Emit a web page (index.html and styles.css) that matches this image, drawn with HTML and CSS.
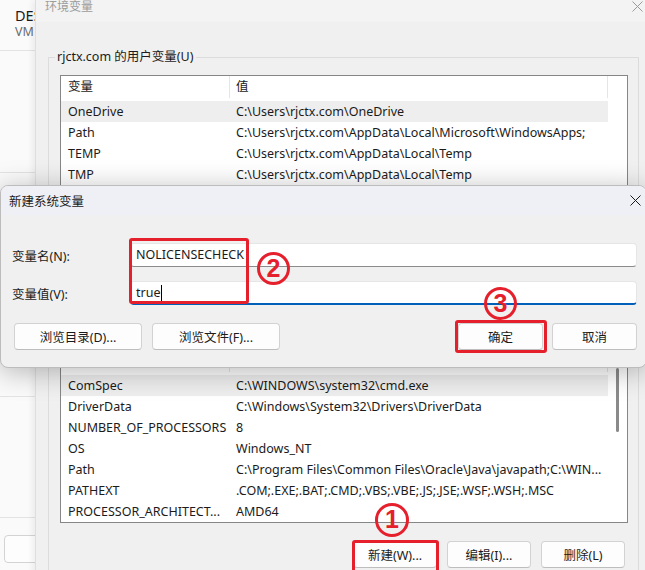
FILE: index.html
```html
<!DOCTYPE html>
<html lang="zh-CN">
<head>
    <meta charset="UTF-8">
    <title>新建系统变量</title>
    <link rel="stylesheet" href="styles.css">
</head>
<body>

<div class="backwin">
    <div class="bw-head">
        <div class="bw-name">DES</div>
        <div class="bw-sub">VM</div>
    </div>
    <div class="bw-cell c1"></div>
    <div class="bw-cell c2"></div>
    <div class="bw-cell c3"></div>
    <div class="bw-btn"></div>
</div>

<div class="envwin">
    <div class="titlebar">
        <span class="title">环境变量</span>
        <svg class="close grey" width="11" height="11" viewBox="0 0 11 11"><path d="M0.5 0.5L10.5 10.5M10.5 0.5L0.5 10.5" /></svg>
    </div>
    <div class="envbody">
        <fieldset class="group">
            <legend>rjctx.com 的用户变量(U)</legend>
            <div class="group-in">
                <div class="list user-list">
                    <div class="list-main">
                        <div class="list-head"><span>变量</span><span>值</span></div>
                        <div class="list-rows">
                            <div class="row sel"><span>OneDrive</span><span>C:\Users\rjctx.com\OneDrive</span></div>
                            <div class="row"><span>Path</span><span>C:\Users\rjctx.com\AppData\Local\Microsoft\WindowsApps;</span></div>
                            <div class="row"><span>TEMP</span><span>C:\Users\rjctx.com\AppData\Local\Temp</span></div>
                            <div class="row"><span>TMP</span><span>C:\Users\rjctx.com\AppData\Local\Temp</span></div>
                        </div>
                    </div>
                    <div class="vscroll"></div>
                </div>
                <div class="btn-row">
                    <button class="btn">新建(N)...</button>
                    <button class="btn">编辑(E)...</button>
                    <button class="btn">删除(D)</button>
                </div>
            </div>
        </fieldset>

        <fieldset class="group sys">
            <legend>系统变量(S)</legend>
            <div class="group-in">
                <div class="list">
                    <div class="list-main">
                        <div class="list-head"><span>变量</span><span>值</span></div>
                        <div class="list-rows">
                            <div class="row sel"><span>ComSpec</span><span>C:\WINDOWS\system32\cmd.exe</span></div>
                            <div class="row"><span>DriverData</span><span>C:\Windows\System32\Drivers\DriverData</span></div>
                            <div class="row"><span>NUMBER_OF_PROCESSORS</span><span>8</span></div>
                            <div class="row"><span>OS</span><span>Windows_NT</span></div>
                            <div class="row"><span>Path</span><span>C:\Program Files\Common Files\Oracle\Java\javapath;C:\WIN...</span></div>
                            <div class="row"><span>PATHEXT</span><span>.COM;.EXE;.BAT;.CMD;.VBS;.VBE;.JS;.JSE;.WSF;.WSH;.MSC</span></div>
                            <div class="row"><span>PROCESSOR_ARCHITECT...</span><span>AMD64</span></div>
                        </div>
                    </div>
                    <div class="vscroll"><div class="thumb"></div></div>
                </div>
                <div class="btn-row">
                    <button class="btn">新建(W)...</button>
                    <button class="btn">编辑(I)...</button>
                    <button class="btn">删除(L)</button>
                </div>
            </div>
        </fieldset>
    </div>
</div>

<div class="dialog">
    <div class="dlg-title">
        <span>新建系统变量</span>
        <svg class="close" width="11" height="11" viewBox="0 0 11 11"><path d="M0.5 0.5L10.5 10.5M10.5 0.5L0.5 10.5" /></svg>
    </div>
    <div class="dlg-body">
        <div class="field">
            <label>变量名(N):</label>
            <div class="input">NOLICENSECHECK</div>
        </div>
        <div class="field">
            <label>变量值(V):</label>
            <div class="input focus">true<span class="caret"></span></div>
        </div>
        <div class="dlg-btns">
            <button class="btn wide">浏览目录(D)...</button>
            <button class="btn wide">浏览文件(F)...</button>
            <div class="right">
                <button class="btn">确定</button>
                <button class="btn">取消</button>
            </div>
        </div>
    </div>
</div>

<!-- 标注 -->
<div class="mark m2"></div>
<div class="mark m3"></div>
<div class="mark m1"></div>
<div class="num n2">2</div>
<div class="num n3">3</div>
<div class="num n1">1</div>

</body>
</html>
```

FILE: styles.css
```css
* {
    box-sizing: border-box;
}
body {
    margin: 0;
    width: 645px;
    height: 570px;
    overflow: hidden;
    position: relative;
    background-color: #f0f0f0;
    font-family: "Noto Sans", "Noto Sans CJK SC", sans-serif;
    font-size: 12.5px;
    color: #1b1b1b;
}

/* window behind */
.backwin {
    position: absolute;
    left: 0;
    top: 0;
    width: 60px;
    height: 570px;
    background-color: #fafafa;
    display: flex;
    flex-direction: column;
}
.bw-head {
    height: 51px;
    border-bottom: 1px solid #e3e3e3;
    padding: 7px 0 0 15px;
}
.bw-name {
    font-size: 14.5px;
    line-height: 17px;
    color: #1b1b1b;
}
.bw-sub {
    font-size: 12.5px;
    line-height: 16px;
    color: #6a6a6a;
}
.bw-cell {
    border-bottom: 1px solid #e3e3e3;
}
.bw-cell.c1 { height: 122px; }
.bw-cell.c2 { height: 224px; }
.bw-cell.c3 { height: 121px; }
.bw-btn {
    margin: 17px 0 0 4px;
    height: 28px;
    border: 1px solid #d3d3d3;
    border-radius: 4px;
    background-color: #fdfdfd;
}

/* 环境变量 */
.envwin {
    position: absolute;
    left: 35px;
    top: 0;
    width: 612px;
    height: 590px;
    background-color: #f0f0f0;
    border-left: 1px solid #dedede;
    box-shadow: -3px 0 6px rgba(0, 0, 0, 0.06);
}
.titlebar {
    height: 22px;
    background-color: #f3f3f3;
    display: flex;
    justify-content: space-between;
    align-items: flex-start;
    padding: 0 4px 0 9px;
}
.titlebar .title {
    color: #9c9c9c;
    font-size: 12px;
    line-height: 14px;
}
.close {
    fill: none;
    stroke: #1b1b1b;
    stroke-width: 1;
}
.close.grey {
    stroke: #9a9a9a;
    margin-top: 1px;
}
.envbody {
    padding: 27px 8px 0 12px;
}
.group {
    margin: 0;
    padding: 0;
    min-width: 0;
    border: 1px solid #dcdcdc;
}
.group legend {
    margin-left: 6px;
    padding: 0 2px;
    line-height: 16px;
}
.group-in {
    padding: 10px 10px 12px 11px;
}
.sys {
    margin-top: 8px;
}

.list {
    display: flex;
    background-color: #fff;
    border: 1px solid #868686;
}
.user-list {
    height: 182px;
}
.list-main {
    width: 547px;
}
.list-head {
    display: grid;
    grid-template-columns: 169px 1fr;
    height: 22px;
    line-height: 22px;
    border-right: 1px solid #e5e5e5;
}
.list-head span:first-child {
    border-right: 1px solid #e5e5e5;
    padding-left: 7px;
}
.list-head span:last-child {
    padding-left: 6px;
}
.list-rows {
    padding-top: 3px;
}
.row {
    display: grid;
    grid-template-columns: 169px 1fr;
    height: 21px;
    line-height: 21px;
    white-space: nowrap;
}
.row span {
    overflow: hidden;
}
.row span:first-child {
    padding-left: 7px;
}
.row span:last-child {
    padding-left: 6px;
}
.row.sel {
    background-color: #eeeeee;
}
.vscroll {
    width: 19px;
    display: flex;
    justify-content: center;
}
.thumb {
    width: 3px;
    height: 64px;
    margin-top: 18px;
    background-color: #8a8a8a;
    border-radius: 2px;
}

.btn-row {
    display: flex;
    justify-content: flex-end;
    gap: 10px;
    margin-top: 18px;
    padding-right: 3px;
}
.btn {
    width: 84px;
    height: 27px;
    padding: 0;
    border: 1px solid #d2d2d2;
    border-bottom-color: #bdbdbd;
    border-radius: 4px;
    background-color: #fdfdfd;
    font: inherit;
    color: #1b1b1b;
}

/* 新建系统变量 */
.dialog {
    position: absolute;
    left: 0;
    top: 185px;
    width: 647px;
    height: 183px;
    background-color: #f0f0f0;
    border: 1px solid #bcbcbc;
    border-radius: 8px;
    box-shadow: 0 4px 28px rgba(0, 0, 0, 0.28);
    overflow: hidden;
}
.dlg-title {
    height: 29px;
    background-color: #eef0f5;
    display: flex;
    justify-content: space-between;
    align-items: center;
    padding: 0 5px 0 8px;
}
.dlg-body {
    padding: 28px 9px 0 11px;
}
.field {
    display: grid;
    grid-template-columns: 118px 1fr;
    align-items: center;
}
.field + .field {
    margin-top: 14px;
}
.input {
    height: 24px;
    background-color: #fff;
    border: 1px solid #e6e6e6;
    border-bottom-color: #8b8b8b;
    border-radius: 4px;
    padding-left: 5px;
    line-height: 21px;
}
.input.focus {
    border-bottom: 2px solid #005fb8;
}
.caret {
    display: inline-block;
    width: 1px;
    height: 16px;
    margin-left: 1px;
    background-color: #000;
    vertical-align: -4px;
}
.dlg-btns {
    display: flex;
    gap: 10px;
    margin-top: 18px;
    padding-left: 2px;
}
.btn.wide {
    width: 128px;
}
.dlg-btns .right {
    margin-left: auto;
    display: flex;
    gap: 9px;
}
.dlg-btns .right .btn {
    width: 85px;
}

/* red marks */
.mark {
    position: absolute;
    border: 3px solid #e5202c;
    border-radius: 3px;
}
.m2 { left: 129px; top: 238px; width: 120px; height: 66px; }
.m3 { left: 455px; top: 320px; width: 92px; height: 33px; }
.m1 { left: 352px; top: 540px; width: 87px; height: 40px; }
.num {
    position: absolute;
    width: 33px;
    height: 33px;
    border: 3.5px solid #e5202c;
    border-radius: 50%;
    color: #e5202c;
    font: bold 25px/26px "Liberation Sans", sans-serif;
    text-align: center;
}
.n2 { left: 257px; top: 252px; }
.n3 { left: 484px; top: 287px; }
.n1 { left: 375px; top: 503px; width: 34px; height: 34px; }
```
